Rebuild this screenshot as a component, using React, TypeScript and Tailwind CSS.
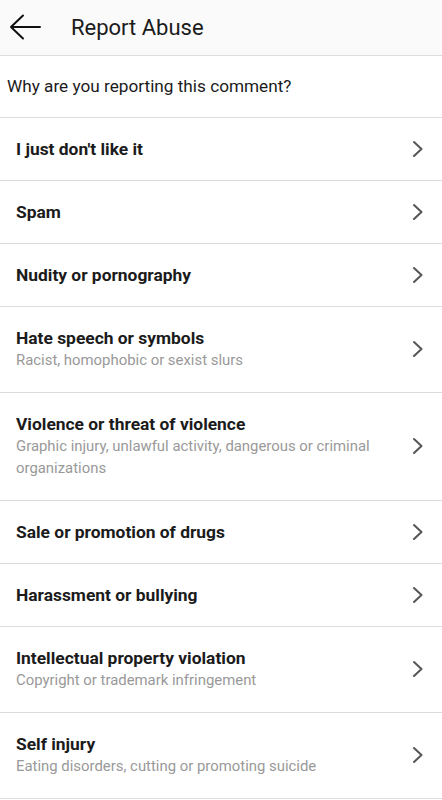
import React from 'react';

type Reason = { title: string; sub?: string };

const reasons: Reason[] = [
  { title: "I just don't like it" },
  { title: 'Spam' },
  { title: 'Nudity or pornography' },
  { title: 'Hate speech or symbols', sub: 'Racist, homophobic or sexist slurs' },
  {
    title: 'Violence or threat of violence',
    sub: 'Graphic injury, unlawful activity, dangerous or criminal organizations',
  },
  { title: 'Sale or promotion of drugs' },
  { title: 'Harassment or bullying' },
  { title: 'Intellectual property violation', sub: 'Copyright or trademark infringement' },
  { title: 'Self injury', sub: 'Eating disorders, cutting or promoting suicide' },
];

const Chevron = () => (
  <svg width="14" height="18" viewBox="0 0 14 18" fill="none" className="shrink-0">
    <path d="M3 2l7.5 7L3 16" stroke="#555" strokeWidth={2} strokeLinecap="round" strokeLinejoin="round" />
  </svg>
);

const App: React.FC = () => {
  return (
    <div className="min-h-[800px] bg-white font-['Roboto',sans-serif] text-[#222]">
      {/* Top bar */}
      <header className="h-[56px] bg-[#fafafa] border-b border-[#dedede] flex items-center">
        <svg width="32" height="28" viewBox="0 0 32 28" fill="none" className="ml-[9px]">
          <path d="M31 13H2M14 1.5L2 13l12 11.5" stroke="#111" strokeWidth={2} strokeLinecap="round" strokeLinejoin="round" />
        </svg>
        <h1 className="ml-[30px] text-[22px] text-[#1b1b1b] leading-none">Report Abuse</h1>
      </header>

      <div className="h-[62px] flex items-center px-[7px] border-b border-[#dcdcdc]">
        <p className="text-[17.2px] text-[#1b1b1b]">Why are you reporting this comment?</p>
      </div>

      <ul>
        {reasons.map((r) => (
          <li
            key={r.title}
            className="flex items-center justify-between pl-4 pr-[17px] pt-5 pb-5 border-b border-[#dcdcdc]"
          >
            <div className="pr-9">
              <div className="text-[17.4px] font-bold leading-[22px] text-[#1b1b1b]">{r.title}</div>
              {r.sub && <div className="text-[14.9px] leading-[22.7px] text-[#999]">{r.sub}</div>}
            </div>
            <Chevron />
          </li>
        ))}
      </ul>
    </div>
  );
};

export default App;
